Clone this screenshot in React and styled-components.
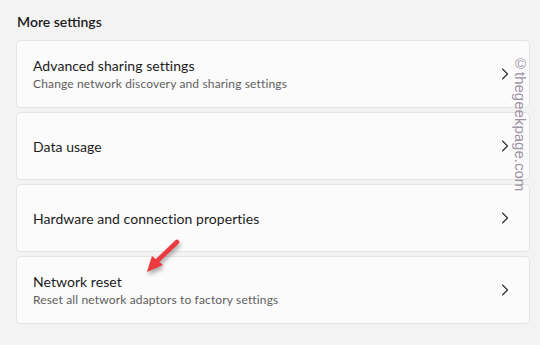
import React from 'react';
import styled, {createGlobalStyle} from 'styled-components';

const GlobalStyle = createGlobalStyle`
  html, body {
    margin: 0;
    padding: 0;
    background: #f3f3f3;
  }
  body {
    font-family: "Segoe UI", Lato, "Noto Sans", sans-serif;
    color: #1b1b1b;
  }
`

const Page = styled.div`
  position: relative;
  width: 540px;
  height: 345px;
  box-sizing: border-box;
  padding: 12px 10px 0 16px;
  overflow: hidden;
`

const Heading = styled.div`
  font-size: 14px;
  font-weight: 600;
  line-height: 20px;
  margin: 0 0 8px 1px;
`

const List = styled.div`
  display: flex;
  flex-direction: column;
  gap: 4px;
`

const Card = styled.div`
  display: flex;
  align-items: center;
  height: 68px;
  box-sizing: border-box;
  padding: 0 20px 0 16px;
  background: #fbfbfb;
  border: 1px solid #e5e5e5;
  border-radius: 5px;
`

const Texts = styled.div`
  flex: 1;
  display: flex;
  flex-direction: column;
  gap: 1px;
`

const Title = styled.div`
  font-size: 14px;
  line-height: 19px;
  letter-spacing: 0.05px;
`

const Sub = styled.div`
  font-size: 12px;
  line-height: 16px;
  letter-spacing: 0.15px;
  color: #5d5d5d;
`

const Chevron = styled.svg`
  width: 8px;
  height: 12px;
  flex: none;
`

const Watermark = styled.div`
  position: absolute;
  left: 512px;
  top: 55px;
  writing-mode: vertical-rl;
  font-family: "Liberation Sans", Arial, sans-serif;
  font-size: 15px;
  color: #9c92a3;
`

const Arrow = styled.svg`
  position: absolute;
  left: 138px;
  top: 234px;
  overflow: visible;
  filter: drop-shadow(1px 3px 2px rgba(0, 0, 0, 0.35));
`

const rows = [
  {title: 'Advanced sharing settings', sub: 'Change network discovery and sharing settings'},
  {title: 'Data usage'},
  {title: 'Hardware and connection properties'},
  {title: 'Network reset', sub: 'Reset all network adaptors to factory settings'},
]

function Row({title, sub}) {
  return (
    <Card>
      <Texts>
        <Title>{title}</Title>
        {sub && <Sub>{sub}</Sub>}
      </Texts>
      <Chevron viewBox="0 0 8 12">
        <path d="M1.5 1 L6.5 6 L1.5 11" fill="none" stroke="#2b2b2b" strokeWidth="1.1" strokeLinecap="round" strokeLinejoin="round" />
      </Chevron>
    </Card>
  )
}

export default function App() {
  return (
    <Page>
      <GlobalStyle />
      <Heading>More settings</Heading>
      <List>
        {rows.map(r => <Row key={r.title} {...r} />)}
      </List>
      <Watermark>©thegeekpage.com</Watermark>
      <Arrow width="50" height="50" viewBox="0 0 50 50">
        <line x1="39" y1="8" x2="18" y2="28" stroke="#ec3a3f" strokeWidth="4.5" strokeLinecap="round" />
        <polygon points="9,38 14,22 25,31" fill="#ec3a3f" />
      </Arrow>
    </Page>
  )
}
